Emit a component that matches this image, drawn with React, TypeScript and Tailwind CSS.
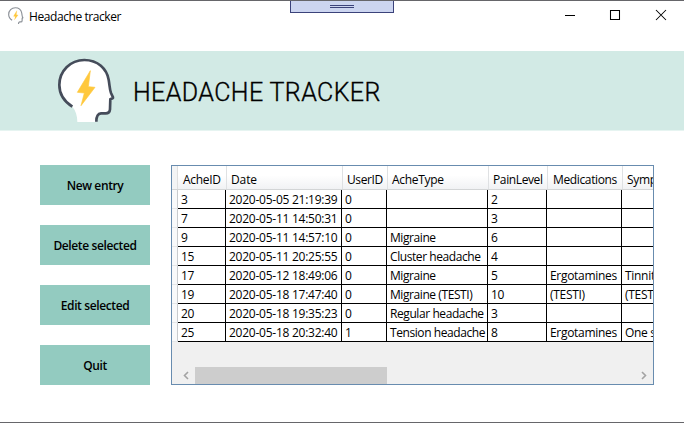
import React from "react";

function HeadLogo({ className, stroke, width }: { className: string; stroke: string; width: number }) {
  return (
    <svg viewBox="51 36 180 204" className={className} aria-hidden="true">
      <path
        d="M97 185C75 171 58 148 58 120C58 78 91 45 133 45C174 45 200 72 206 104C209 121 209 137 213 145L220 158Q221 163 212 164L210 193Q209 205 197 205L183 205Q169 206 168 231L112 231C112 212 107 196 97 185Z"
        fill="#fff"
      />
      <path
        d="M97 185C75 171 58 148 58 120C58 78 91 45 133 45C174 45 200 72 206 104C209 121 209 134 213 144L219 157Q220 161 211 162L210 193Q209 205 197 205L183 205Q169 206 169 230"
        fill="none"
        stroke={stroke}
        strokeWidth={width}
        strokeLinejoin="round"
      />
      <path d="M151 77L112 142L133 144L123 182L165 127L145 125Z" fill="#ffc83d" stroke="#ffc83d" strokeWidth="2" strokeLinejoin="round" />
    </svg>
  );
}

const columns = [
  { name: "AcheID", head: "pl-[5px] tracking-[-0.3px]", cell: "tracking-[-0.25px]" },
  { name: "Date", head: "pl-[4px] tracking-[-0.1px]", cell: "tracking-[-0.25px]" },
  { name: "UserID", head: "pl-[4px] tracking-[-0.4px]", cell: "tracking-[-0.25px]" },
  { name: "AcheType", head: "pl-[4px] tracking-[-0.3px]", cell: "tracking-[-0.42px]" },
  { name: "PainLevel", head: "pl-[4px] tracking-[-0.38px]", cell: "tracking-[-0.25px]" },
  { name: "Medications", head: "pl-[5px] tracking-[-0.36px]", cell: "tracking-[-0.3px]" },
  { name: "Symptoms", head: "pl-[4px] tracking-[-0.3px]", cell: "tracking-[-0.3px]" },
];

const rows = [
  ["3", "2020-05-05 21:19:39", "0", "", "2", "", ""],
  ["7", "2020-05-11 14:50:31", "0", "", "3", "", ""],
  ["9", "2020-05-11 14:57:10", "0", "Migraine", "6", "", ""],
  ["15", "2020-05-11 20:25:55", "0", "Cluster headache", "4", "", ""],
  ["17", "2020-05-12 18:49:06", "0", "Migraine", "5", "Ergotamines", "Tinnitus"],
  ["19", "2020-05-18 17:47:40", "0", "Migraine (TESTI)", "10", "(TESTI)", "(TESTI)"],
  ["20", "2020-05-18 19:35:23", "0", "Regular headache", "3", "", ""],
  ["25", "2020-05-18 20:32:40", "1", "Tension headache", "8", "Ergotamines", "One sided"],
];

const actions = ["New entry", "Delete selected", "Edit selected", "Quit"];

function TitleBar() {
  return (
    <header className="flex h-[50px] items-start justify-between">
      <div className="flex items-center pl-[8px] pt-[5px]">
        <HeadLogo className="h-[18px] w-[16px]" stroke="#8b9097" width={13} />
        <span className="ml-[5px] whitespace-nowrap pt-[2px] text-[12px] leading-[18px] tracking-[-0.42px]">Headache tracker</span>
      </div>
      <div className="flex h-[29px] text-black">
        {["M19 14.5H29", "M18.5 9.5H27.5V18.5H18.5Z", "M18 9L28 19M28 9L18 19"].map((d) => (
          <svg key={d} width="46" height="29" viewBox="0 0 46 29" fill="none" stroke="currentColor" strokeWidth="1.05">
            <path d={d} />
          </svg>
        ))}
      </div>
    </header>
  );
}

function DataGrid() {
  return (
    <section className="flex h-[220px] w-[483px] flex-col overflow-hidden border border-[#688caf] bg-[#f0f0f0]">
      <div className="grid h-[24px] shrink-0 grid-cols-[6px_49px_116px_45px_101px_59px_75px_75px] border-b border-[#d3d5d6] bg-linear-to-b from-white from-40% to-[#f1f2f4]">
        <div className="border-r border-[#dfdfdf] bg-[#f3f4f5]" />
        {columns.map((c) => (
          <div key={c.name} className={`${c.head} overflow-hidden whitespace-nowrap border-r border-[#dfe1e3] pt-[4px] text-[12px] leading-[19px]`}>
            {c.name}
          </div>
        ))}
      </div>
      {rows.map((row) => (
        <div key={row[0]} className="grid h-[19px] shrink-0 grid-cols-[6px_48px_116px_45px_101px_59px_75px_75px]">
          <div className="border-b border-r border-b-[#e4e6e8] border-r-[#c8cbce] bg-[#f8f9fa]" />
          {row.map((cell, i) => (
            <div
              key={i}
              className={`${columns[i].cell} overflow-hidden whitespace-nowrap border-b border-r border-black bg-white pl-[3px] text-[12px] leading-[19px]`}
            >
              {cell}
            </div>
          ))}
        </div>
      ))}
      <div className="mt-auto flex h-[17px] w-full shrink-0 justify-between text-[#a3a3a3]">
        <div className="flex">
          <svg width="23" height="17" viewBox="0 0 23 17" fill="none" stroke="currentColor" strokeWidth="1.6">
            <path d="M16 5L12.5 8.5L16 12" />
          </svg>
          <div className="w-[192px] bg-[#cdcdcd]" />
        </div>
        <svg width="17" height="17" viewBox="0 0 17 17" fill="none" stroke="currentColor" strokeWidth="1.6">
          <path d="M6 5L9.5 8.5L6 12" />
        </svg>
      </div>
    </section>
  );
}

export default function App() {
  return (
    <div className="relative h-[423px] w-[684px] overflow-hidden border-y border-[#66666a] bg-white font-['Open_Sans','Noto_Sans',sans-serif] text-black">
      <TitleBar />
      <div className="flex h-[80px] items-start border-b border-[#e6f4f1] bg-[#d2eae5] pl-[57px] pt-[6px]">
        <HeadLogo className="h-[68px] w-[60px]" stroke="#454c5a" width={8} />
        <h1 className="ml-[16px] mt-[18px] whitespace-nowrap font-['Roboto',sans-serif] text-[25px] font-light leading-[36px] tracking-[0.4px] [-webkit-text-stroke:0.35px_black]">
          HEADACHE TRACKER
        </h1>
      </div>
      <main className="flex items-start gap-[21px] pl-[40px] pt-[34px]">
        <nav className="flex w-[110px] flex-col gap-[20px]">
          {actions.map((label) => (
            <button key={label} className="h-[40px] whitespace-nowrap bg-[#93cbc0] pt-[1px] text-[12px] font-semibold tracking-[-0.38px]">
              {label}
            </button>
          ))}
        </nav>
        <DataGrid />
      </main>
      <div className="absolute -top-px left-[290px] flex h-[13px] w-[104px] flex-col items-center gap-px border border-[#3b427a] bg-[#ccd5f0] pt-[4px]">
        <div className="h-px w-[24px] bg-[#3b427a]" />
        <div className="h-px w-[24px] bg-[#3b427a]" />
      </div>
    </div>
  );
}
